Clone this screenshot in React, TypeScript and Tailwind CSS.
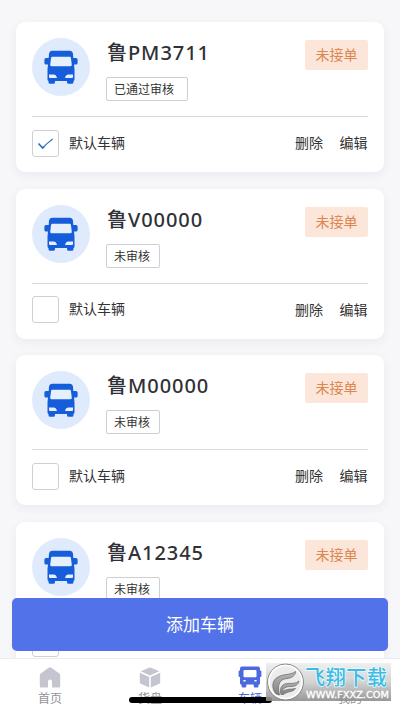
import React from "react";

type Vehicle = { plate: string; status: string; checked?: boolean; tagWidth: string };

const vehicles: Vehicle[] = [
  { plate: "PM3711", status: "已通过审核", checked: true, tagWidth: "w-[82px]" },
  { plate: "V00000", status: "未审核", tagWidth: "w-[54px]" },
  { plate: "M00000", status: "未审核", tagWidth: "w-[54px]" },
  { plate: "A12345", status: "未审核", tagWidth: "w-[54px]" },
];

function VanIcon() {
  return (
    <svg width="34" height="34" viewBox="0 0 34 34" fill="#165ddb">
      <path d="M8 0.800H26Q28.600 0.800 29 3.400L29.300 8H32Q33.600 8 33.600 9.600V13Q33.600 14.500 32 14.500H30L30.500 19V29Q30.500 31 29.500 31V32.200Q29.500 33.800 27.800 33.800H24.600Q23 33.800 23 32.200V31H11V32.200Q11 33.800 9.400 33.800H6.200Q4.500 33.800 4.500 32.200V31Q3.500 31 3.500 29V19L4 14.500H2Q0.400 14.500 0.400 13V9.600Q0.400 8 2 8H4.700L5 3.400Q5.400 0.800 8 0.800Z" />
      <path d="M8.200 6.800H25.800Q26.800 6.800 26.900 7.800L27.800 14.800Q27.900 16.200 26.700 16.200H7.300Q6.100 16.200 6.200 14.800L7.100 7.800Q7.200 6.800 8.200 6.800Z" fill="#e6effc" />
      <path d="M5 24.500H9.400Q12.200 24.500 13 27.900H6Q5 27.900 5 26.900ZM29 24.500H24.600Q21.800 24.500 21 27.900H28Q29 27.900 29 26.900Z" fill="#e6effc" />
    </svg>
  );
}

function VehicleCard({ v }: { v: Vehicle }) {
  return (
    <section className="h-[150px] shrink-0 rounded-[9px] bg-white px-4 pt-4 shadow-[0_3px_10px_rgba(70,70,130,0.07)]">
      <div className="flex h-[79px] items-start border-b border-[#d9d9db]">
        <div className="flex size-[58px] shrink-0 items-center justify-center rounded-full bg-[#dfebfc]">
          <VanIcon />
        </div>
        <div className="ml-[17px] flex flex-col items-start">
          <h2 className="h-[39px] font-['Noto_Sans','Noto_Sans_CJK_SC',sans-serif] text-[20px] leading-[29px] font-medium tracking-[0.950px] whitespace-nowrap text-[#303136]">
            鲁{v.plate}
          </h2>
          <span className={`-ml-px flex h-[24px] ${v.tagWidth} items-center rounded-[2px] border border-[#cfcfd2] pl-[7px] text-[12px] whitespace-nowrap text-[#333]`}>
            {v.status}
          </span>
        </div>
        <span className="mt-[2px] ml-auto flex h-[30px] w-[63px] items-center justify-center rounded-[2px] bg-[#fce6d9] pb-px text-[14px] text-[#dc8750]">
          未接单
        </span>
      </div>
      <div className="flex h-[52px] items-center text-[14px] text-[#333]">
        <span className="flex size-[27px] items-center justify-center rounded-[3px] border border-[#d0d0d3]">
          {v.checked && (
            <svg width="17" height="13" viewBox="0 0 17 13" fill="none" strokeLinejoin="round">
              <path d="M1.500 6.500L5.600 11L7 9.700" stroke="#2772b8" strokeWidth="1.700" />
              <path d="M5.600 11L10 6.700L15.700 2" stroke="#2772b8" strokeWidth="1.100" />
            </svg>
          )}
        </span>
        <span className="ml-[10px] pb-[2px]">默认车辆</span>
        <button className="ml-auto pb-px">删除</button>
        <button className="mr-[0.500px] ml-[16.500px] pb-px">编辑</button>
      </div>
    </section>
  );
}

function HomeIcon() {
  return (
    <svg width="22" height="21" viewBox="0 0 22 21" fill="#c5c5d0">
      <path d="M9.700 0.700q1.300-0.900 2.600 0l8 5.700q0.900 0.700 0.900 1.800v10.800q0 1.500-1.500 1.500H13v-6q0-2-2-2t-2 2v6H2.300q-1.500 0-1.500-1.500V8.200q0-1.100 0.900-1.800Z" />
    </svg>
  );
}

function BoxIcon() {
  return (
    <svg width="22" height="21" viewBox="0 0 22 21" fill="#c5c5d0">
      <path d="M10 0.700q1-0.500 2 0l8.300 3.600L11 8.600 1.700 4.300Z" />
      <path d="M0.800 5.800L10.200 10v10.400L1.700 16.700q-0.900-0.400-0.900-1.500Z" />
      <path d="M21.200 5.800L11.800 10v10.400l8.500-3.700q0.900-0.400 0.900-1.500Z" />
    </svg>
  );
}

function BusIcon() {
  return (
    <svg width="24" height="22" viewBox="0 0 24 22" fill="#4c69df">
      <path
        fillRule="evenodd"
        d="M4 0.500h16q2 0 2 2v2h0.500q0.900 0 0.900 0.900v4.600q0 0.900-0.900 0.900H22v6.600q0 1-1 1h-0.500v1.700q0 1.200-1.200 1.200h-2.400q-1.200 0-1.200-1.200v-1.700H8.300v1.700q0 1.200-1.200 1.200H4.700q-1.200 0-1.200-1.200v-1.700H3q-1 0-1-1v-6.600h-0.500q-0.900 0-0.900-0.900V5.400q0-0.900 0.900-0.900H2v-2q0-2 2-2ZM6.500 4q-1 0-1 1v5.200q0 1 1 1h11q1 0 1-1V5q0-1-1-1ZM5.400 14v1.500h2.200V14ZM16.400 14v1.500h2.200V14Z"
      />
    </svg>
  );
}

function ProfileIcon() {
  return (
    <svg width="22" height="21" viewBox="0 0 22 21" fill="#c5c5d0">
      <circle cx="11" cy="5.500" r="5" />
      <path d="M2 20v-3q0-5 5-5h8q5 0 5 5v3Z" />
    </svg>
  );
}

const tabs = [
  { label: "首页", icon: <HomeIcon /> },
  { label: "货盘", icon: <BoxIcon /> },
  { label: "车辆", icon: <BusIcon />, active: true },
  { label: "我的", icon: <ProfileIcon /> },
];

function Watermark() {
  return (
    <div className="absolute top-[663px] left-[266px] h-[38px] w-[125px] bg-linear-to-b from-[#eeeeee]/90 via-[#cfcfcf]/90 to-[#8c8c8c]/90">
      <svg width="125" height="38" viewBox="0 0 125 38">
        <defs>
          <linearGradient id="metal" x1="0" y1="0" x2="0" y2="1">
            <stop offset="0" stopColor="#b8b8b8" />
            <stop offset="1" stopColor="#808080" />
          </linearGradient>
        </defs>
        <circle cx="19.500" cy="19" r="17.900" fill="#ececec" stroke="#777" strokeWidth="0.900" />
        <circle cx="19.500" cy="19" r="16.500" fill="none" stroke="#fff" strokeWidth="1.500" />
        <g fill="url(#metal)" stroke="#707070" strokeWidth="0.800" strokeLinejoin="round">
          <path d="M10 31C5 25 6 17 12 14C18 10.500 24 12.500 29.500 8.500C29.500 12.500 26 15 21 15.500C13.500 16.500 11 21 13.500 32Z" />
          <path d="M15 31.500C13 24 17 20.500 22 20.500C27 20.500 30 20.500 33 18C32 22 29 23.500 25 23.500C20 23.500 17 25 16.500 28.500C21 25.500 25 26.500 29.500 25.500C27 29.500 21 28 17.500 31.500Z" />
        </g>
        <g fontFamily="'Noto Sans CJK SC', sans-serif" fontWeight="500">
          <text x="39" y="22" fontSize="20" textLength="82" lengthAdjust="spacing" fill="#3dbbe4" stroke="#effbff" strokeWidth="1.400" paintOrder="stroke">
            飞翔下载
          </text>
          <text x="40" y="35" fontSize="8.500" textLength="83" lengthAdjust="spacingAndGlyphs" fill="#fff" fontFamily="'DejaVu Sans', sans-serif" stroke="#fff" strokeWidth="0.300">
            WWW.FXXZ.COM
          </text>
        </g>
      </svg>
    </div>
  );
}

export default function App() {
  return (
    <div className="relative flex h-[711px] w-[400px] flex-col overflow-hidden bg-[#f7f7f9] font-['Noto_Sans_CJK_SC',sans-serif]">
      <main className="flex min-h-0 flex-1 flex-col gap-[16.600px] overflow-hidden px-4 pt-[22.300px]">
        {vehicles.map((v) => (
          <VehicleCard key={v.plate} v={v} />
        ))}
      </main>
      <nav className="z-10 grid h-[53px] shrink-0 grid-cols-4 border-t border-[#ececee] bg-white">
        {tabs.map((t) => (
          <div key={t.label} className={`flex flex-col items-center pt-[7px] text-[12px] ${t.active ? "text-[#4c69df]" : "text-[#929298]"}`}>
            <span className="flex h-[22px] items-center">{t.icon}</span>
            <span className="leading-[19px]">{t.label}</span>
          </div>
        ))}
      </nav>
      <button className="absolute top-[597.500px] left-3 z-20 h-[53px] w-[376px] rounded-[5px] bg-[#5272ea] pb-px text-[17px] text-white">
        添加车辆
      </button>
      <div className="absolute top-[697px] left-[129px] z-20 h-[6px] w-[143px] rounded-full bg-black" />
      <div className="absolute inset-0 z-30">
        <Watermark />
      </div>
    </div>
  );
}
